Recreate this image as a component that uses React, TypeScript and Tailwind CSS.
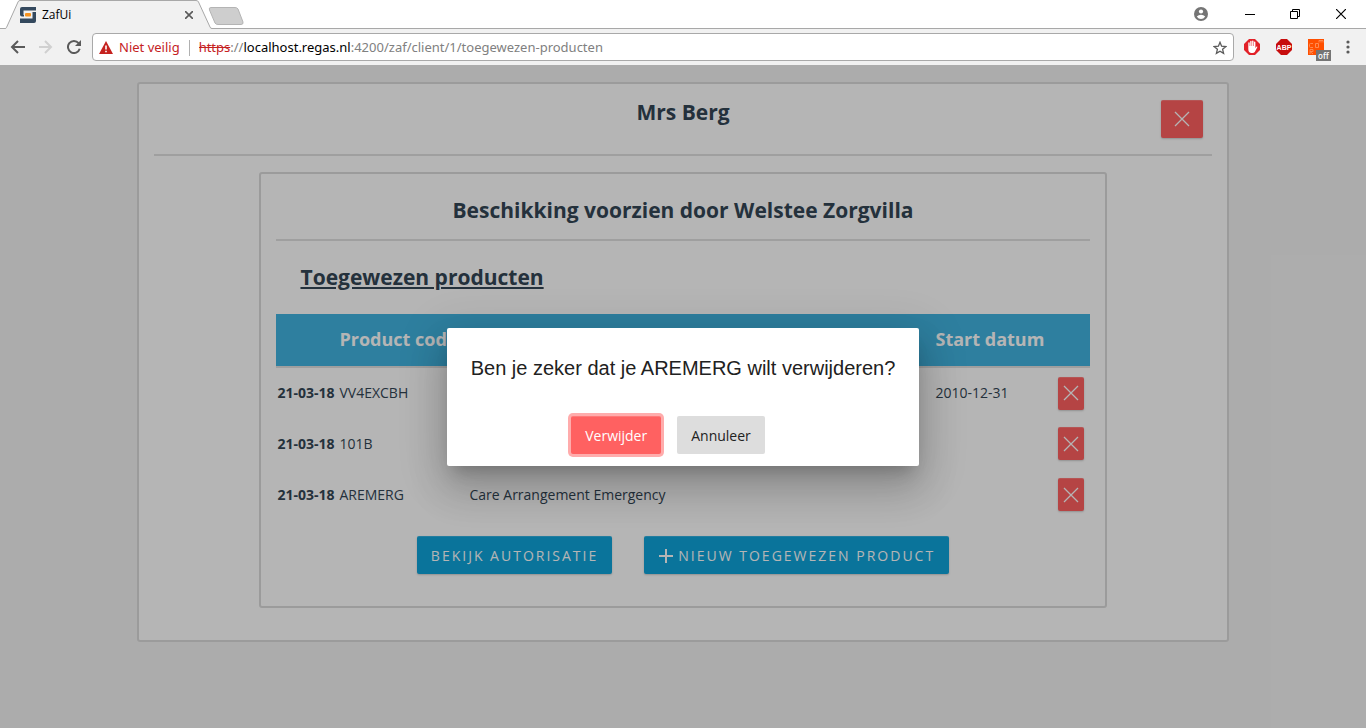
import React from "react";

type Product = { date: string; code: string; name: string; start: string };

const products: Product[] = [
  { date: "21-03-18", code: "VV4EXCBH", name: "", start: "2010-12-31" },
  { date: "21-03-18", code: "101B", name: "", start: "" },
  { date: "21-03-18", code: "AREMERG", name: "Care Arrangement Emergency", start: "" },
];

function Cross() {
  return (
    <svg width="16" height="16" viewBox="0 0 16 16" fill="none" stroke="currentColor" strokeWidth="1.3" aria-hidden="true">
      <path d="M1 1L15 15M15 1L1 15" />
    </svg>
  );
}

function TabStrip() {
  return (
    <div className="flex h-7 items-stretch justify-between bg-white">
      <div className="flex">
        <div className="relative ml-1 flex w-[208px] items-center pt-0.5">
          <svg className="absolute inset-0 z-10 h-[29px] w-full" viewBox="0 0 208 29" preserveAspectRatio="none" aria-hidden="true">
            <path d="M0 29V28.5H2L14 2Q14.500 .5 16 .5H192Q194 .5 194.500 2L206 27Q206.500 28.500 208 28.500V29Z" fill="#f1f1f1" />
            <path d="M0 28.500H1Q2 28.500 2.500 27.500L14 2Q14.500 .5 16 .5H192Q194 .5 194.500 2L206 27Q206.500 28.500 208 28.500" fill="none" stroke="#a8a8a8" />
          </svg>
          <svg className="relative z-20 ml-4" width="16" height="16" viewBox="0 0 16 16" aria-hidden="true">
            <path d="M2 0H16V3.500H3.500V8H4V9.500H2Q0 9.500 0 7.500V2Q0 0 2 0Z" fill="#34495e" />
            <path d="M16 5V14Q16 16 14 16H0V11.500H12.500V5Z" fill="#34495e" />
            <rect x="5" y="6" width="6" height="3.500" rx="1" fill="#f7931e" />
          </svg>
          <span className="relative z-20 ml-1.5 text-xs text-black">ZafUi</span>
          <button className="absolute right-[15px] z-20 flex h-4 w-4 items-center justify-center text-[#5a5a5a]" aria-label="Tabblad sluiten">
            <svg width="8" height="8" viewBox="0 0 8 8" stroke="currentColor" strokeWidth="1.600" aria-hidden="true"><path d="M0 0L8 8M8 0L0 8" /></svg>
          </button>
        </div>
        <button className="mt-1.5" aria-label="Nieuw tabblad">
          <svg className="-mt-0.5 -ml-1" width="36" height="18" viewBox="0 0 36 18" aria-hidden="true">
            <path d="M3 .5H27Q29 .5 30 2L35 15Q35.500 17.500 33 17.500H10Q8 17.500 7 16L1.500 3Q.5 .5 3 .5Z" fill="#cecece" stroke="#b4b4b4" />
          </svg>
        </button>
      </div>
      <div className="flex items-center pr-0.5 text-black">
        <button className="flex w-[52px] items-center justify-center" aria-label="Profiel">
          <svg width="14" height="14" viewBox="0 0 14 14" aria-hidden="true">
            <circle cx="7" cy="7" r="7" fill="#757575" />
            <circle cx="7" cy="4.500" r="2.100" fill="#fff" />
            <path d="M2.800 9.500Q4.500 7.800 7 7.800T11.200 9.500Q9.500 12 7 12T2.800 9.500Z" fill="#fff" />
          </svg>
        </button>
        <button className="flex h-7 w-[45px] items-center justify-center" aria-label="Minimaliseren">
          <svg width="10" height="11" viewBox="0 0 10 11" stroke="currentColor" aria-hidden="true"><path d="M0 5.500H10" /></svg>
        </button>
        <button className="flex h-7 w-[46px] items-center justify-center" aria-label="Verkleinen">
          <svg width="10" height="10" viewBox="0 0 10 10" fill="none" stroke="currentColor" aria-hidden="true"><path d="M.5 2.500H7.500V9.500H.5ZM2.500 2.500V.5H9.500V7.500H7.500" /></svg>
        </button>
        <button className="flex h-7 w-[46px] items-center justify-center" aria-label="Sluiten">
          <svg width="10" height="10" viewBox="0 0 10 10" stroke="currentColor" strokeWidth="1.200" aria-hidden="true"><path d="M0 0L10 10M10 0L0 10" /></svg>
        </button>
      </div>
    </div>
  );
}

function Toolbar() {
  return (
    <div className="flex h-[37px] items-center border-t border-[#a8a8a8] bg-[#f1f1f1] px-2.5 text-[#5a5a5a]">
      <div className="flex w-[82px] shrink-0 items-center gap-3.5">
        <button aria-label="Terug">
          <svg width="15" height="14" viewBox="0 0 15 14" fill="none" stroke="currentColor" strokeWidth="2" aria-hidden="true"><path d="M15 7H2M8 1L2 7L8 13" /></svg>
        </button>
        <button className="text-[#d0d0d0]" aria-label="Vooruit">
          <svg width="14" height="14" viewBox="0 0 14 14" fill="none" stroke="currentColor" strokeWidth="2" aria-hidden="true"><path d="M0 7H12M6 1L12 7L6 13" /></svg>
        </button>
        <button aria-label="Vernieuwen">
          <svg width="14" height="14" viewBox="0 0 14 14" aria-hidden="true">
            <path d="M11.600 3.200A6 6 0 1 0 12.700 8.800" fill="none" stroke="currentColor" strokeWidth="2" />
            <path d="M14 0V6H8Z" fill="currentColor" />
          </svg>
        </button>
      </div>
      <div className="flex h-7 min-w-0 flex-1 items-center rounded-sm border border-[#a9a9a9] bg-white px-1.5 pt-px font-['Noto_Sans','Open_Sans',sans-serif] text-[13px]">
        <svg className="shrink-0" width="14" height="13" viewBox="0 0 14 13" aria-hidden="true">
          <path d="M7 0L14 13H0Z" fill="#c5221f" />
          <path d="M6.200 4.500H7.800V8.500H6.200ZM6.200 9.700H7.800V11.200H6.200Z" fill="#fff" />
        </svg>
        <span className="ml-1.5 whitespace-nowrap text-[#c5221f]">Niet veilig</span>
        <span className="mx-[9px] h-4 w-px bg-[#b0b0b0]" />
        <span className="flex-1 truncate text-[#808080]">
          <span className="text-[#c5221f] line-through">https</span>://<span className="text-black">localhost.regas.nl</span>:4200/zaf/client/1/toegewezen-producten
        </span>
        <button aria-label="Bladwijzer">
          <svg width="14" height="14" viewBox="0 0 14 14" fill="none" stroke="currentColor" strokeWidth="1.300" aria-hidden="true"><path d="M7 1.300L8.600 5.200L12.900 5.500L9.600 8.300L10.600 12.400L7 10.200L3.400 12.400L4.400 8.300L1.100 5.500L5.400 5.200Z" /></svg>
        </button>
      </div>
      <div className="flex shrink-0 items-center gap-4 pl-2.5">
        <button aria-label="Blokkeren">
          <svg width="16" height="16" viewBox="0 0 16 16" aria-hidden="true">
            <path d="M5 0H11L16 5V11L11 16H5L0 11V5Z" fill="#e22128" />
            <path d="M4.300 8V4Q4.300 3.200 5 3.200T5.700 4V7H6.200V2.500Q6.200 1.700 6.900 1.700T7.600 2.500V7H8.100V2.200Q8.100 1.500 8.800 1.500T9.500 2.200V7H10V3.300Q10 2.600 10.700 2.600T11.400 3.300V9L12.600 7.500Q13.800 7.300 13.300 8.300L10.800 13Q10 14 8.500 14H7Q4.300 13.500 4.300 10Z" fill="#fff" />
          </svg>
        </button>
        <button className="relative flex h-4 w-4 items-center justify-center" aria-label="Adblock Plus">
          <svg className="absolute inset-0" width="16" height="16" viewBox="0 0 16 16" aria-hidden="true"><path d="M5 0H11L16 5V11L11 16H5L0 11V5Z" fill="#c70d0d" /></svg>
          <span className="relative font-['Liberation_Sans',sans-serif] text-[7px] leading-none font-bold text-white">ABP</span>
        </button>
        <button className="relative h-4 w-4 bg-[#ff4f00]" aria-label="CORS">
          <svg className="block" width="16" height="16" viewBox="0 0 16 16" fill="none" stroke="#ff8a50" aria-hidden="true">
            <path d="M5 4.500H2.500Q1.500 4.500 1.500 5.500V7.500Q1.500 8.500 2.500 8.500H5M7.500 4.500H10.500V8.500H7.500ZM2 15V10.500H5V12.500H2L5 15M11 3.500V1.500H15V3.500M13 1.500V3.500" />
          </svg>
          <span className="absolute top-[11px] left-2 bg-[#757575] px-0.5 text-[8px] leading-[11px] font-semibold text-white">off</span>
        </button>
        <button className="flex w-4 justify-center" aria-label="Menu">
          <svg width="4" height="14" viewBox="0 0 4 14" fill="currentColor" aria-hidden="true"><circle cx="2" cy="2" r="1.600" /><circle cx="2" cy="7" r="1.600" /><circle cx="2" cy="12" r="1.600" /></svg>
        </button>
      </div>
    </div>
  );
}

const raised = "rounded-xs shadow-[0_1px_2px_rgba(0,0,0,0.2),inset_0_2px_0_-1px_rgba(255,255,255,0.15)]";

function ProductTable() {
  return (
    <table className="w-full table-fixed border-collapse text-left text-sm">
      <colgroup>
        <col className="w-[62px]" />
        <col className="w-[130px]" />
        <col />
        <col className="w-[121px]" />
        <col className="w-[34px]" />
      </colgroup>
      <thead>
        <tr className="h-[53px] border-b-2 border-[#e0e0e0] bg-[#41b4e1] text-lg text-white">
          <th />
          <th className="px-px pb-0.5 font-bold whitespace-nowrap">Product code</th>
          <th />
          <th className="px-px pb-0.5 font-bold whitespace-nowrap">Start datum</th>
          <th />
        </tr>
      </thead>
      <tbody>
        {products.map((p) => (
          <tr key={p.code} className="h-[51px]">
            <td className="px-px font-bold whitespace-nowrap">{p.date}</td>
            <td className="px-px">{p.code}</td>
            <td className="px-px">{p.name}</td>
            <td className="px-px">{p.start}</td>
            <td className="px-0.5">
              <button className={`flex h-[33px] w-[26px] items-center justify-center bg-[#ff6161] text-white ${raised}`} aria-label={`Verwijder ${p.code}`}>
                <Cross />
              </button>
            </td>
          </tr>
        ))}
      </tbody>
    </table>
  );
}

function ConfirmDialog() {
  return (
    <div className="absolute inset-0 z-30 flex items-center justify-center bg-black/29">
      <div role="dialog" aria-modal="true" aria-labelledby="confirm-title" className="rounded-xs bg-white px-6 pt-6 pb-3 shadow-[0_11px_15px_-7px_rgba(0,0,0,0.2),0_24px_38px_3px_rgba(0,0,0,0.14),0_9px_46px_8px_rgba(0,0,0,0.12)]">
        <h2 id="confirm-title" className="font-['Liberation_Sans',Arial,sans-serif] text-xl leading-8 text-[#212121]">
          Ben je zeker dat je AREMERG wilt verwijderen?
        </h2>
        <div className="mt-8 flex justify-center gap-4 pr-[30px] text-sm">
          <button className="h-[38px] rounded-xs bg-[#ff6161] px-3.5 pt-0.5 text-white shadow-[0_0_0_3px_#ffacac,inset_0_2px_0_-1px_rgba(255,255,255,0.15)]">Verwijder</button>
          <button className="h-[38px] rounded-xs bg-[#dddddd] px-3.5 pt-0.5 text-[#222222]">Annuleer</button>
        </div>
      </div>
    </div>
  );
}

export default function App() {
  return (
    <div className="flex min-h-screen flex-col font-['Open_Sans','Noto_Sans',sans-serif]">
      <header>
        <TabStrip />
        <Toolbar />
      </header>
      <main className="relative flex-1 bg-[#f3f3f3] py-[17px] text-[#334655]">
        <section className="mx-auto w-4/5 rounded-[3px] border-2 border-[#dbdbdb] bg-white px-[15px] pb-8">
          <div className="grid h-[72px] grid-cols-[1fr_auto_1fr] items-start border-b-2 border-[#e0e0e0]">
            <h1 className="col-start-2 pt-3 text-[21px] leading-8 font-bold">Mrs Berg</h1>
            <button className={`mt-4 mr-[9px] flex h-[38px] w-[42px] items-center justify-center justify-self-end bg-[#ff6161] text-white ${raised}`} aria-label="Sluiten">
              <Cross />
            </button>
          </div>
          <div className="mx-auto mt-4 w-4/5 rounded-[3px] border-2 border-[#dbdbdb] px-[15px] pb-8">
            <h2 className="border-b-2 border-[#e0e0e0] pt-5 pb-[13px] text-center text-[21px] leading-8 font-bold">Beschikking voorzien door Welstee Zorgvilla</h2>
            <h3 className="mt-5 mb-[21px] pl-6 text-[21px] leading-8 font-bold underline">Toegewezen producten</h3>
            <ProductTable />
            <div className="mt-4 flex justify-center gap-8 text-sm tracking-[2px] text-white uppercase">
              <button className={`h-[38px] bg-[#0fa4db] px-3.5 pt-0.5 uppercase ${raised}`}>Bekijk autorisatie</button>
              <button className={`flex h-[38px] items-center gap-1 bg-[#0fa4db] px-3.5 pt-0.5 uppercase ${raised}`}>
                <svg width="16" height="16" viewBox="0 0 16 16" stroke="currentColor" strokeWidth="2" aria-hidden="true"><path d="M8 1V15M1 8H15" /></svg>
                Nieuw toegewezen product
              </button>
            </div>
          </div>
        </section>
        <ConfirmDialog />
      </main>
    </div>
  );
}
